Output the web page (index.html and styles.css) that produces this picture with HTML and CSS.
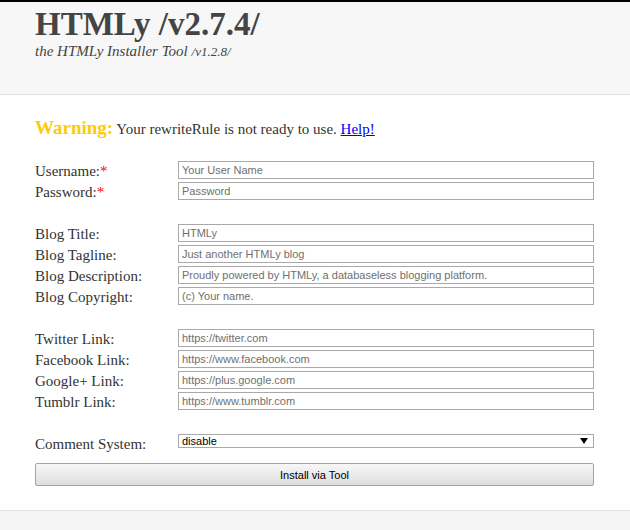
FILE: index.html
```html
<!DOCTYPE html>
<html lang="en">
<head>
<meta charset="utf-8">
<title>HTMLy Installer Tool</title>
<link rel="stylesheet" href="styles.css">
</head>
<body>
<div class="topbar"></div>
<header class="header">
  <div class="wrap">
    <h1 class="title">HTMLy /v2.7.4/</h1>
    <p class="subtitle">the HTMLy Installer Tool <span class="subver">/v1.2.8/</span></p>
  </div>
</header>
<main class="wrap main">
  <p class="warning"><strong class="warn-label">Warning:</strong> Your rewriteRule is not ready to use. <a href="#" class="help">Help!</a></p>
  <form class="form">
    <div class="group">
      <div class="row"><label class="label">Username:<span class="req">*</span></label><input class="field" type="text" placeholder="Your User Name"></div>
      <div class="row"><label class="label">Password:<span class="req">*</span></label><input class="field" type="password" placeholder="Password"></div>
    </div>
    <div class="group">
      <div class="row"><label class="label">Blog Title:</label><input class="field" type="text" placeholder="HTMLy"></div>
      <div class="row"><label class="label">Blog Tagline:</label><input class="field" type="text" placeholder="Just another HTMLy blog"></div>
      <div class="row"><label class="label">Blog Description:</label><input class="field" type="text" placeholder="Proudly powered by HTMLy, a databaseless blogging platform."></div>
      <div class="row"><label class="label">Blog Copyright:</label><input class="field" type="text" placeholder="(c) Your name."></div>
    </div>
    <div class="group">
      <div class="row"><label class="label">Twitter Link:</label><input class="field" type="text" placeholder="https://twitter.com"></div>
      <div class="row"><label class="label">Facebook Link:</label><input class="field" type="text" placeholder="https://www.facebook.com"></div>
      <div class="row"><label class="label">Google+ Link:</label><input class="field" type="text" placeholder="https://plus.google.com"></div>
      <div class="row"><label class="label">Tumblr Link:</label><input class="field" type="text" placeholder="https://www.tumblr.com"></div>
    </div>
    <div class="group group-last">
      <div class="row"><label class="label">Comment System:</label>
        <div class="select-wrap"><select class="select"><option>disable</option><option>facebook</option><option>disqus</option></select></div>
      </div>
    </div>
    <button type="button" class="button">Install via Tool</button>
  </form>
</main>
<footer class="footer"></footer>
</body>
</html>
```

FILE: styles.css
```css
html, body {
  margin: 0;
  padding: 0;
  background: #ffffff;
}

body {
  font-family: "Liberation Serif", "Times New Roman", serif;
  color: #333333;
}

.topbar {
  height: 2px;
  background: #000000;
}

.wrap {
  width: 559px;
  margin-left: 35px;
}

.header {
  background: #f7f7f7;
  border-bottom: 1px solid #e2e2e2;
  padding: 4px 0 33px;
}

.title {
  margin: 0;
  font-size: 33px;
  line-height: 36px;
  font-weight: 700;
  color: #444444;
}

.subtitle {
  margin: 0;
  font-size: 15px;
  line-height: 18px;
  font-style: italic;
  color: #444444;
}

.subver {
  font-size: 13px;
}

.main {
  padding: 22px 0 24px 0;
}

.warning {
  margin: 0 0 21px;
  height: 23px;
  font-size: 15px;
  line-height: 22px;
  color: #333333;
}

.warn-label {
  font-size: 19px;
  color: #fccc0a;
}

.help {
  color: #0000ee;
  text-decoration: underline;
}

.form {
  display: flex;
  flex-direction: column;
}

.group {
  display: flex;
  flex-direction: column;
  gap: 3px;
  margin-bottom: 24px;
}

.group-last {
  margin-bottom: 11px;
}

.row {
  display: grid;
  grid-template-columns: 143px 416px;
  height: 18px;
}

.label {
  font-size: 15px;
  line-height: 20px;
  color: #333333;
  white-space: nowrap;
}

.req {
  color: #ff0000;
}

.field {
  box-sizing: border-box;
  width: 416px;
  height: 18px;
  margin: 0;
  padding: 0 3px;
  border: 1px solid #a9a9a9;
  border-radius: 0;
  background: #ffffff;
  font-family: "Liberation Sans", Arial, sans-serif;
  font-size: 11px;
  color: #333333;
  outline: none;
}

.field::placeholder {
  color: #6f6f6f;
  opacity: 1;
}

.select-wrap {
  position: relative;
  width: 416px;
  height: 14px;
}

.select {
  box-sizing: border-box;
  display: block;
  width: 416px;
  height: 14px;
  margin: 0;
  padding: 0 3px;
  border: 1px solid #a9a9a9;
  border-radius: 0;
  background: #ffffff;
  font-family: "Liberation Sans", Arial, sans-serif;
  font-size: 11px;
  line-height: 12px;
  color: #000000;
  -webkit-appearance: none;
  appearance: none;
  outline: none;
}

.select-wrap::after {
  content: "";
  position: absolute;
  right: 6px;
  top: 4px;
  width: 0;
  height: 0;
  border-left: 4px solid transparent;
  border-right: 4px solid transparent;
  border-top: 6px solid #000000;
  pointer-events: none;
}

.button {
  box-sizing: border-box;
  width: 559px;
  height: 23px;
  margin: 0;
  padding: 0;
  border: 1px solid #a3a3a3;
  border-radius: 2px;
  background: linear-gradient(#f7f7f7, #dedede);
  font-family: "Liberation Sans", Arial, sans-serif;
  font-size: 11px;
  color: #000000;
  cursor: pointer;
}

.footer {
  height: 40px;
  background: #f5f5f5;
  border-top: 1px solid #e3e3e3;
}
```
